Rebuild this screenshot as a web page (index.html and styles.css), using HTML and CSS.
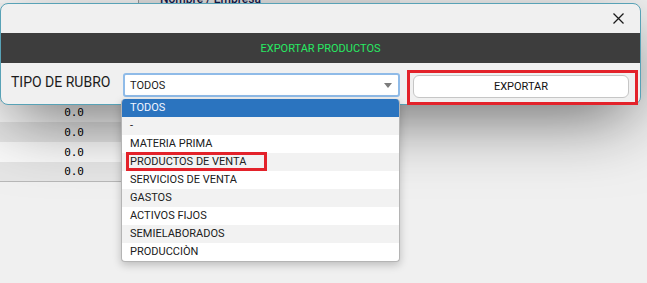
FILE: index.html
```html
<!DOCTYPE html>
<html lang="es">
<head>
<meta charset="utf-8">
<title>Exportar productos</title>
<link rel="stylesheet" href="styles.css">
</head>
<body>
<div class="page">
  <div class="thead">
    <div class="th th-first"></div>
    <div class="th th-name"><span class="th-text">Nombre / Empresa</span></div>
  </div>
  <div class="tbody">
    <div class="row row-hidden"></div>
    <div class="row row-a"><span class="num">0.0</span></div>
    <div class="row row-b"><span class="num">0.0</span></div>
    <div class="row row-a"><span class="num">0.0</span></div>
    <div class="row row-b row-last"><span class="num">0.0</span></div>
  </div>
</div>

<div class="dialog">
  <div class="dlg-title">
    <svg class="close" width="11" height="11" viewBox="0 0 11 11"><path d="M0.5 0.5L10.5 10.5M10.5 0.5L0.5 10.5" stroke="#1a1a1a" stroke-width="1.25" fill="none"/></svg>
  </div>
  <div class="dlg-header">EXPORTAR PRODUCTOS</div>
  <div class="dlg-body">
    <label class="lbl">TIPO DE RUBRO</label>
    <div class="select">
      <span class="select-value">TODOS</span>
      <svg class="arrow" width="8" height="5" viewBox="0 0 8 5"><path d="M0 0H8L4 5Z" fill="#7c7c7c"/></svg>
    </div>
    <div class="mark-wrap">
      <button class="btn">EXPORTAR</button>
    </div>
  </div>
</div>

<ul class="dropdown">
  <li class="opt opt-selected">TODOS</li>
  <li class="opt opt-alt">-</li>
  <li class="opt">MATERIA PRIMA</li>
  <li class="opt opt-alt">PRODUCTOS DE VENTA</li>
  <li class="opt">SERVICIOS DE VENTA</li>
  <li class="opt opt-alt">GASTOS</li>
  <li class="opt">ACTIVOS FIJOS</li>
  <li class="opt opt-alt">SEMIELABORADOS</li>
  <li class="opt">PRODUCCIÒN</li>
</ul>
<div class="mark-opt"></div>
</body>
</html>
```
FILE: styles.css
```css
html, body {
  margin: 0;
  padding: 0;
}
body {
  width: 647px;
  height: 283px;
  overflow: hidden;
  position: relative;
  background: #f0f0f0;
  font-family: Roboto, "Liberation Sans", sans-serif;
  color: #1b1b1b;
}

/* background table */
.page {
  width: 400px;
}
.thead {
  display: flex;
  height: 21px;
  margin-top: -18px;
}
.th-first {
  width: 138px;
  background: #f4f4f4;
  border-right: 1px solid #9a9a9a;
}
.th-name {
  flex: 1;
  background: #e2e2e2;
  display: flex;
  align-items: flex-end;
  padding-left: 21px;
}
.th-text {
  font-size: 12px;
  font-weight: 500;
  line-height: 14px;
  color: #16194a;
  margin-bottom: -3px;
}
.row {
  height: 20px;
  display: flex;
  align-items: center;
}
.row-hidden {
  height: 99px;
}
.row-a { background: #fafafa; }
.row-b { background: #e6e6e6; }
.row-last {
  height: 19px;
  border-bottom: 1px solid #b8b8b8;
}
.num {
  width: 84px;
  text-align: right;
  font-family: "DejaVu Sans Mono", "Liberation Mono", monospace;
  font-size: 11px;
  color: #000;
}

/* dialog */
.dialog {
  position: absolute;
  left: 0;
  top: 3px;
  width: 641px;
  height: 102px;
  box-sizing: border-box;
  border: 1px solid #58a2b6;
  border-radius: 8px;
  background: #f0f0f0;
  box-shadow: 0 20px 70px -10px rgba(0, 0, 0, 0.6);
}
.dlg-title {
  height: 29px;
  display: flex;
  justify-content: flex-end;
  align-items: flex-start;
}
.close {
  display: block;
  margin-top: 9px;
  margin-right: 16px;
}
.dlg-header {
  height: 30px;
  background: #3d3d3d;
  color: #27ea62;
  font-size: 11px;
  display: flex;
  align-items: center;
  justify-content: center;
}
.dlg-body {
  height: 41px;
  display: flex;
  align-items: flex-start;
}
.lbl {
  width: 112px;
  margin-left: 10px;
  margin-top: 9px;
  font-size: 14px;
  line-height: 20px;
  color: #1b1b1b;
}
.select {
  width: 277px;
  height: 24px;
  margin-top: 10px;
  box-sizing: border-box;
  border: 2px solid #8fbbe8;
  border-radius: 3px;
  background: #fff;
  display: flex;
  align-items: center;
  justify-content: space-between;
  padding: 0 6px 0 5px;
}
.select-value {
  font-size: 11px;
  color: #1b1b1b;
}
.arrow {
  display: block;
}
.mark-wrap {
  width: 231px;
  height: 35px;
  margin-left: 7px;
  margin-top: 7px;
  box-sizing: border-box;
  border: 3px solid #e3222a;
  padding: 2px 6px 0 3px;
}
.btn {
  display: block;
  width: 216px;
  height: 23px;
  box-sizing: border-box;
  border: 1px solid #c6c6c6;
  border-radius: 6px;
  background: #fff;
  font-family: Roboto, "Liberation Sans", sans-serif;
  font-size: 11px;
  color: #111;
  padding: 0;
}

/* dropdown list */
.dropdown {
  position: absolute;
  left: 121px;
  top: 99px;
  width: 279px;
  margin: 0;
  padding: 0;
  list-style: none;
  box-sizing: border-box;
  border: 1px solid #b4b4b4;
  border-top: 0;
  border-radius: 4px;
  overflow: hidden;
  background: #fff;
  box-shadow: 0 3px 9px rgba(0, 0, 0, 0.22);
}
.opt {
  height: 18px;
  line-height: 18px;
  padding-left: 8px;
  font-size: 11px;
  color: #202020;
}
.opt-alt {
  background: #f2f2f2;
}
.opt-selected {
  background: #2b74bf;
  color: #f2f6ff;
}
.mark-opt {
  position: absolute;
  left: 126px;
  top: 152px;
  width: 141px;
  height: 19px;
  box-sizing: border-box;
  border: 3px solid #e3222a;
}
```
